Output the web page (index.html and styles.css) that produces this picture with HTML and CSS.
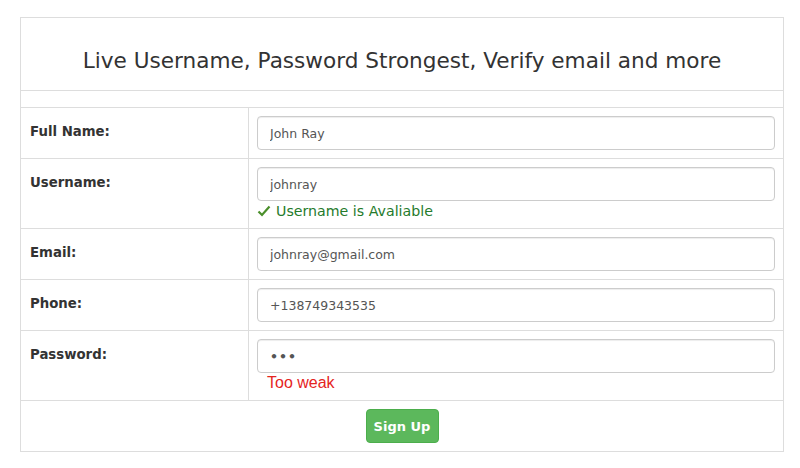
FILE: index.html
```html
<!DOCTYPE html>
<html>
<head>
<meta charset="utf-8">
<link rel="stylesheet" href="styles.css">
</head>
<body>
<table class="signup">
  <tr><th colspan="2" class="title-cell"><h3 class="title">Live Username, Password Strongest, Verify email and more</h3></th></tr>
  <tr><td colspan="2" class="spacer"></td></tr>
  <tr>
    <td class="label">Full Name:</td>
    <td class="field"><input class="form-control" type="text" value="John Ray"></td>
  </tr>
  <tr>
    <td class="label">Username:</td>
    <td class="field"><input class="form-control" type="text" value="johnray">
      <div class="ok"><svg class="check" width="14" height="12" viewBox="0 0 14 12"><path d="M1.5 6.5 L5 10 L12.5 1.5" fill="none" stroke="#4a8f2a" stroke-width="2.2"/></svg>Username is Avaliable</div>
    </td>
  </tr>
  <tr>
    <td class="label">Email:</td>
    <td class="field"><input class="form-control" type="text" value="johnray@gmail.com"></td>
  </tr>
  <tr>
    <td class="label">Phone:</td>
    <td class="field"><input class="form-control" type="text" value="+138749343535"></td>
  </tr>
  <tr>
    <td class="label">Password:</td>
    <td class="field"><input class="form-control pw" type="password" value="abc">
      <div class="weak">Too weak</div>
    </td>
  </tr>
  <tr><td colspan="2" class="actions"><button class="btn">Sign Up</button></td></tr>
</table>
</body>
</html>
```

FILE: styles.css
```css
html, body { background: #fff; }
body {
  margin: 17px 0 0 20px;
  font-family: "DejaVu Sans", sans-serif;
  color: #333;
}
.signup {
  border-collapse: collapse;
  width: 764px;
  border: 1px solid #ddd;
}
.signup td, .signup th {
  border: 1px solid #ddd;
  padding: 8px;
  vertical-align: top;
  text-align: left;
}
.title-cell { height: 56px; padding: 8px; text-align: center !important; vertical-align: middle !important; }
.title {
  margin: 0;
  font-weight: normal;
  font-size: 21.6px;
  text-align: center;
  color: #333;
  padding-top: 12px;
}
.spacer { height: 0; }
.label {
  width: 212px;
  font-weight: bold;
  font-size: 13.3px;
  line-height: 20px;
  padding-left: 9px !important;
  padding-top: 14px !important;
}
.field { padding: 8px; }
.form-control {
  display: block;
  box-sizing: border-box;
  width: 518px;
  height: 34px;
  padding: 6px 12px;
  border: 1px solid #ccc;
  border-radius: 4px;
  font-family: "DejaVu Sans", sans-serif;
  font-size: 12.5px;
  color: #555;
  box-shadow: inset 0 1px 1px rgba(0,0,0,.075);
  margin: 0;
  outline: none;
}
.pw { letter-spacing: 1px; font-weight: bold; }
.ok {
  display: flex;
  align-items: center;
  height: 19px;
  color: #257b2c;
  font-size: 14.2px;
}
.check { margin: 1px 5px 0 0; }
.weak {
  height: 19px;
  line-height: 19px;
  padding-left: 10px;
  color: #e5241e;
  font-family: "Liberation Sans", Arial, sans-serif;
  font-size: 16px;
}
.actions { text-align: center !important; padding: 8px; }
.btn {
  display: inline-block;
  width: 73px;
  height: 34px;
  background: #5cb85c;
  border: 1px solid #4cae4c;
  border-radius: 4px;
  color: #fff;
  font-family: "DejaVu Sans", sans-serif;
  font-size: 13px;
  font-weight: 600;
  padding: 0;
}
```
